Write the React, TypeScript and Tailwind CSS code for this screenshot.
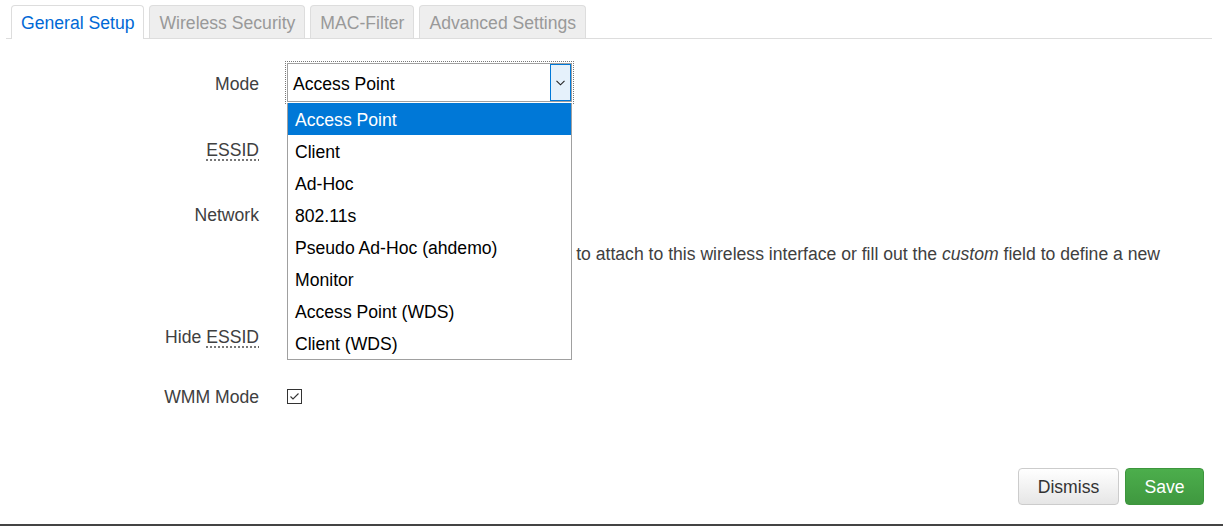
import React from 'react';

const tabs = ['General Setup', 'Wireless Security', 'MAC-Filter', 'Advanced Settings'];

const modes = [
  'Access Point',
  'Client',
  'Ad-Hoc',
  '802.11s',
  'Pseudo Ad-Hoc (ahdemo)',
  'Monitor',
  'Access Point (WDS)',
  'Client (WDS)',
];

function CheckBox({ checked }: { checked: boolean }) {
  return (
    <svg width="15" height="15" viewBox="0 0 15 15" className="block">
      <rect x="0.5" y="0.5" width="14" height="14" fill="#fff" stroke="#333" />
      {checked && <polyline points="3.5,7.5 6,10 11.5,4.5" fill="none" stroke="#333" strokeWidth="1.1" />}
    </svg>
  );
}

function Label({ children }: { children: React.ReactNode }) {
  return <div className="w-[259px] shrink-0 pt-[2px] text-right">{children}</div>;
}

export default function App() {
  return (
    <div className="relative w-[1223px] h-[526px] overflow-hidden bg-white border-b-2 border-[#444] font-['Liberation_Sans',Arial,sans-serif] text-[17.6px] leading-[20px] text-[#404040]">
      {/* tabs */}
      <div className="pt-[5px] pl-[6px]">
        <ul className="flex items-start gap-[5px] w-[1206px] h-[34px] border-b border-[#ddd] pl-[5px]">
          {tabs.map((t, i) =>
            i === 0 ? (
              <li key={t} className="h-[34px] px-[9px] pt-[7px] bg-white border-x border-t border-[#ddd] rounded-t-[4px] text-[#0069d6]">
                {t}
              </li>
            ) : (
              <li key={t} className="h-[33px] px-[9px] pt-[7px] bg-[#eee] border-x border-t border-[#ddd] rounded-t-[4px] text-[#999]">
                {t}
              </li>
            )
          )}
        </ul>
      </div>

      {/* form */}
      <div className="mt-[24px]">
        <div className="flex items-center h-[39px]">
          <Label>Mode</Label>
          <div className="ml-[28px] outline-1 outline-dotted outline-[#777] outline-offset-[1px]">
            <div className="flex items-center w-[285px] h-[39px] border border-[#a0a0a0] bg-white text-black">
              <span className="flex-1 pl-[5px] pt-[2px]">Access Point</span>
              <span className="flex items-center justify-center w-[21px] h-full border border-[#0078d7] bg-[#e5f1fb]">
                <svg width="9" height="6" viewBox="0 0 9 6">
                  <polyline points="0.5,0.8 4.5,4.8 8.5,0.8" fill="none" stroke="#222" strokeWidth="1.1" />
                </svg>
              </span>
            </div>
          </div>
        </div>

        <div className="flex items-center h-[32px] mt-[31px]">
          <Label>
            <span className="underline decoration-dotted decoration-[#666] underline-offset-[4px]">ESSID</span>
          </Label>
          <div className="ml-[28px] w-[285px] h-[32px] border border-[#ccc]" />
        </div>

        <div className="flex items-center h-[37px] mt-[30px]">
          <Label>Network</Label>
          <div className="ml-[28px] w-[285px] h-[37px] border border-[#ccc]" />
        </div>

        <div className="flex mt-[11px]">
          <div className="w-[259px] shrink-0" />
          <div className="ml-[28px] w-[910px] pl-[32px] leading-[23px]">
            Choose the network(s) you want to attach to this wireless interface or fill out the <em>custom</em> field to define a new network.
          </div>
        </div>

        <div className="flex items-center h-[30px] mt-[32px]">
          <Label>
            Hide <span className="underline decoration-dotted decoration-[#666] underline-offset-[4px]">ESSID</span>
          </Label>
          <div className="ml-[28px]">
            <CheckBox checked={false} />
          </div>
        </div>

        <div className="flex items-center h-[30px] mt-[30px]">
          <Label>WMM Mode</Label>
          <div className="ml-[28px]">
            <CheckBox checked={true} />
          </div>
        </div>

        <div className="flex justify-end gap-[6px] pr-[19px] mt-[57px]">
          <button className="w-[101px] h-[37px] rounded-[4px] border border-[#ccc] bg-gradient-to-b from-white to-[#e6e6e6] text-[#333]">
            Dismiss
          </button>
          <button className="w-[79px] h-[37px] rounded-[4px] border border-[#3d963d] bg-gradient-to-b from-[#4cae4c] to-[#3f983f] text-white">
            Save
          </button>
        </div>
      </div>

      {/* open select list */}
      <ul className="absolute left-[287px] top-[103px] w-[285px] border border-t-0 border-[#a0a0a0] bg-white text-black z-10">
        {modes.map((m, i) => (
          <li
            key={m}
            className={
              i === 0
                ? 'h-[32px] pl-[7px] pt-[2px] flex items-center bg-[#0078d7] text-white'
                : 'h-[32px] pl-[7px] pt-[2px] flex items-center'
            }
          >
            {m}
          </li>
        ))}
      </ul>
    </div>
  );
}
